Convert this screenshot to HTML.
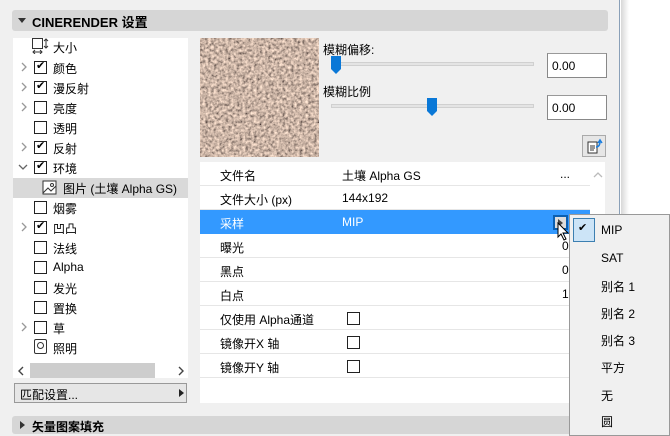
<!DOCTYPE html>
<html><head><meta charset="utf-8"><style>
*{margin:0;padding:0;box-sizing:border-box}
body{width:670px;height:436px;overflow:hidden;background:#fff;font-family:"Liberation Sans","Noto Sans CJK SC",sans-serif;font-size:12px;color:#000;position:relative}
.a{position:absolute}
.main{left:0;top:0;width:620px;height:436px;background:#f0f0f0;border-right:1px solid #8aa0b8}
.shadow{left:621px;top:0;width:8px;height:436px;background:linear-gradient(to right,#d8d8d8,#fff)}
.hdr{background:#d6d6d6;border-radius:3px}
.tri{width:0;height:0;border-left:4px solid transparent;border-right:4px solid transparent;border-top:5px solid #333}
.trr{width:0;height:0;border-top:4px solid transparent;border-bottom:4px solid transparent;border-left:5px solid #333}
.cb{width:13px;height:13px;border:1px solid #222;background:#fff}
.cb.c::after{content:"✔";position:absolute;left:1px;top:-3px;font-size:11px;font-family:"DejaVu Sans",sans-serif}
.chev{width:8px;height:10px}
.row{height:24px;border-bottom:1px solid #e6e6e6;width:390px;left:200px}
.row span{position:absolute;top:5px}
.mi{left:601px;font-size:12px}
.inp{background:#fff;border:1px solid #888;border-top-color:#999;width:60px;height:25px;padding:5px 0 0 4px;font-size:12px}
.trk{height:4px;background:#e4e4e4;border:1px solid #d0d0d0}
.thumb{width:10px;height:18px;background:#0a78d7;clip-path:polygon(0 0,100% 0,100% 72%,50% 100%,0 72%)}
</style></head><body>
<svg width="0" height="0" style="position:absolute"><defs><symbol id="cv" viewBox="0 0 8 10"><path d="M2 1 L6 5 L2 9" fill="none" stroke="#999" stroke-width="1.3"/></symbol></defs></svg>
<div class="a main"></div>
<div class="a shadow"></div>
<div class="a hdr" style="left:12px;top:10px;width:596px;height:21px"></div>
<div class="a tri" style="left:18px;top:18px"></div>
<div class="a" style="left:32px;top:12px;font-weight:bold;font-size:13px">CINERENDER 设置</div>

<div class="a" style="left:13px;top:38px;width:175px;height:340px;background:#fff"></div>
<div class="a" style="left:13px;top:178px;width:175px;height:20px;background:#d9d9d9"></div>
<svg class="a" style="left:32px;top:38px" width="18" height="16"><rect x="0.5" y="0.5" width="10" height="10" fill="none" stroke="#333"/><path d="M14 1v9M12 3l2-2 2 2M12 8l2 2 2-2M1 14h9M3 12l-2 2 2 2M8 12l2 2-2 2" fill="none" stroke="#333"/></svg>
<div class="a" style="left:53px;top:39px">大小</div>

<svg class="a chev" style="left:20px;top:62px"><use href="#cv"/></svg><div class="a cb c" style="left:34px;top:61px"></div><div class="a" style="left:53px;top:60px">颜色</div>
<svg class="a chev" style="left:20px;top:82px"><use href="#cv"/></svg><div class="a cb c" style="left:34px;top:81px"></div><div class="a" style="left:53px;top:80px">漫反射</div>
<svg class="a chev" style="left:20px;top:102px"><use href="#cv"/></svg><div class="a cb" style="left:34px;top:101px"></div><div class="a" style="left:53px;top:100px">亮度</div>
<div class="a cb" style="left:34px;top:121px"></div><div class="a" style="left:53px;top:120px">透明</div>
<svg class="a chev" style="left:20px;top:142px"><use href="#cv"/></svg><div class="a cb c" style="left:34px;top:141px"></div><div class="a" style="left:53px;top:140px">反射</div>
<svg class="a" style="left:18px;top:163px" width="10" height="8"><path d="M1 2 L5 6 L9 2" fill="none" stroke="#666" stroke-width="1.3"/></svg><div class="a cb c" style="left:34px;top:161px"></div><div class="a" style="left:53px;top:160px">环境</div>
<svg class="a" style="left:42px;top:180px" width="16" height="16"><rect x="1" y="1" width="13" height="13" fill="#fff" stroke="#333"/><path d="M1 13 L6 8 L9 11 L14 6" fill="none" stroke="#333"/><circle cx="10" cy="5" r="1.5" fill="none" stroke="#333"/></svg>
<div class="a" style="left:63px;top:180px">图片 (土壤 Alpha GS)</div>
<div class="a cb" style="left:34px;top:201px"></div><div class="a" style="left:53px;top:200px">烟雾</div>
<svg class="a chev" style="left:20px;top:222px"><use href="#cv"/></svg><div class="a cb c" style="left:34px;top:221px"></div><div class="a" style="left:53px;top:220px">凹凸</div>
<div class="a cb" style="left:34px;top:241px"></div><div class="a" style="left:53px;top:240px">法线</div>
<div class="a cb" style="left:34px;top:261px"></div><div class="a" style="left:53px;top:260px">Alpha</div>
<div class="a cb" style="left:34px;top:281px"></div><div class="a" style="left:53px;top:280px">发光</div>
<div class="a cb" style="left:34px;top:301px"></div><div class="a" style="left:53px;top:300px">置换</div>
<svg class="a chev" style="left:20px;top:322px"><use href="#cv"/></svg><div class="a cb" style="left:34px;top:321px"></div><div class="a" style="left:53px;top:320px">草</div>
<div class="a" style="left:34px;top:339px;width:13px;height:15px;border:1px solid #333;border-radius:2px"></div><div class="a" style="left:37px;top:342px;width:7px;height:7px;border:1px solid #333;border-radius:50%"></div>
<div class="a" style="left:53px;top:340px">照明</div>
<div class="a" style="left:30px;top:363px;width:125px;height:15px;background:#cdcdcd"></div>
<svg class="a" style="left:17px;top:366px" width="8" height="10"><path d="M6 1 L2 5 L6 9" fill="none" stroke="#444" stroke-width="1.4"/></svg>
<svg class="a" style="left:177px;top:366px" width="8" height="10"><path d="M2 1 L6 5 L2 9" fill="none" stroke="#444" stroke-width="1.4"/></svg>
<div class="a" style="left:14px;top:383px;width:173px;height:20px;border:1px solid #999;background:#e6e6e6"></div>
<div class="a" style="left:20px;top:386px">匹配设置...</div>
<div class="a trr" style="left:179px;top:389px;border-left-color:#222"></div>
<div class="a hdr" style="left:12px;top:416px;width:596px;height:18px"></div>
<div class="a trr" style="left:20px;top:421px"></div>
<div class="a" style="left:32px;top:418px;font-weight:bold">矢量图案填充</div>

<svg class="a" style="left:200px;top:38px" width="119" height="119"><filter id="n"><feTurbulence type="fractalNoise" baseFrequency="0.35" numOctaves="3" seed="4"/><feColorMatrix values="1.4 0 0 0 -0.1  1.1 0 0 0 -0.09  0.9 0 0 0 -0.07  0 0 0 0 1"/></filter><rect width="119" height="119" fill="#8e6a55"/><rect width="119" height="119" filter="url(#n)"/></svg>
<div class="a" style="left:323px;top:41px">模糊偏移:</div>
<div class="a trk" style="left:331px;top:62px;width:203px"></div>
<div class="a thumb" style="left:331px;top:56px"></div>
<div class="a inp" style="left:547px;top:53px">0.00</div>
<div class="a" style="left:323px;top:83px">模糊比例</div>
<div class="a trk" style="left:331px;top:104px;width:203px"></div>
<div class="a thumb" style="left:427px;top:98px"></div>
<div class="a inp" style="left:547px;top:95px">0.00</div>
<div class="a" style="left:582px;top:135px;width:24px;height:22px;border:1px solid #aaa;background:#e6e6e6"></div>
<svg class="a" style="left:587px;top:138px" width="16" height="16"><rect x="1" y="4" width="9" height="11" fill="#fff" stroke="#333"/><path d="M3 8h5M3 10h5M3 12h4" stroke="#333"/><path d="M9 9 Q13 9 13 3 M11 5 L13 2 L15 5" fill="none" stroke="#1a7ee0" stroke-width="1.5"/></svg>

<div class="a" style="left:200px;top:162px;width:405px;height:241px;background:#fff"></div>
<div class="a row" style="top:162px"><span style="left:20px">文件名</span><span style="left:142px">土壤 Alpha GS</span><span style="left:360px">...</span></div>
<div class="a row" style="top:186px"><span style="left:20px">文件大小 (px)</span><span style="left:142px">144x192</span></div>
<div class="a row" style="top:210px;background:#3399ff;color:#fff;border-color:#3399ff"><span style="left:20px">采样</span><span style="left:142px">MIP</span></div>
<div class="a" style="left:553px;top:215px;width:15px;height:15px;border:2px solid #0b5fb0;background:#ddd"></div>
<div class="a trr" style="left:558px;top:219px;border-left-color:#444"></div>
<svg class="a" style="left:557px;top:222px" width="14" height="20"><path d="M1 1 L1 15 L4 12 L7 18 L9 17 L6 11 L11 11 Z" fill="#fff" stroke="#000"/></svg>
<div class="a row" style="top:234px"><span style="left:20px">曝光</span><span style="left:362px">0</span></div>
<div class="a row" style="top:258px"><span style="left:20px">黑点</span><span style="left:362px">0</span></div>
<div class="a row" style="top:282px"><span style="left:20px">白点</span><span style="left:362px">1</span></div>
<div class="a row" style="top:306px"><span style="left:20px">仅使用 Alpha通道</span></div>
<div class="a cb" style="left:347px;top:312px"></div>
<div class="a row" style="top:330px"><span style="left:20px">镜像开X 轴</span></div>
<div class="a cb" style="left:347px;top:336px"></div>
<div class="a row" style="top:354px"><span style="left:20px">镜像开Y 轴</span></div>
<div class="a cb" style="left:347px;top:360px"></div>
<svg class="a" style="left:593px;top:171px" width="10" height="7"><path d="M1 6 L5 2 L9 6" fill="none" stroke="#bbb" stroke-width="1.3"/></svg>

<div class="a" style="left:569px;top:214px;width:101px;height:222px;background:#f0f0f0;border:1px solid #999"></div>
<div class="a" style="left:573px;top:218px;width:22px;height:24px;background:#cce4f7;border:1px solid #3c7fb1"></div>
<div class="a" style="left:578px;top:221px;font-size:11px;font-family:'DejaVu Sans',sans-serif">✔</div>
<div class="a mi" style="top:223px">MIP</div>
<div class="a mi" style="top:251px">SAT</div>
<div class="a mi" style="top:278px">别名 1</div>
<div class="a mi" style="top:305px">别名 2</div>
<div class="a mi" style="top:332px">别名 3</div>
<div class="a mi" style="top:359px">平方</div>
<div class="a mi" style="top:387px">无</div>
<div class="a mi" style="top:413px">圆</div>
</body></html>
